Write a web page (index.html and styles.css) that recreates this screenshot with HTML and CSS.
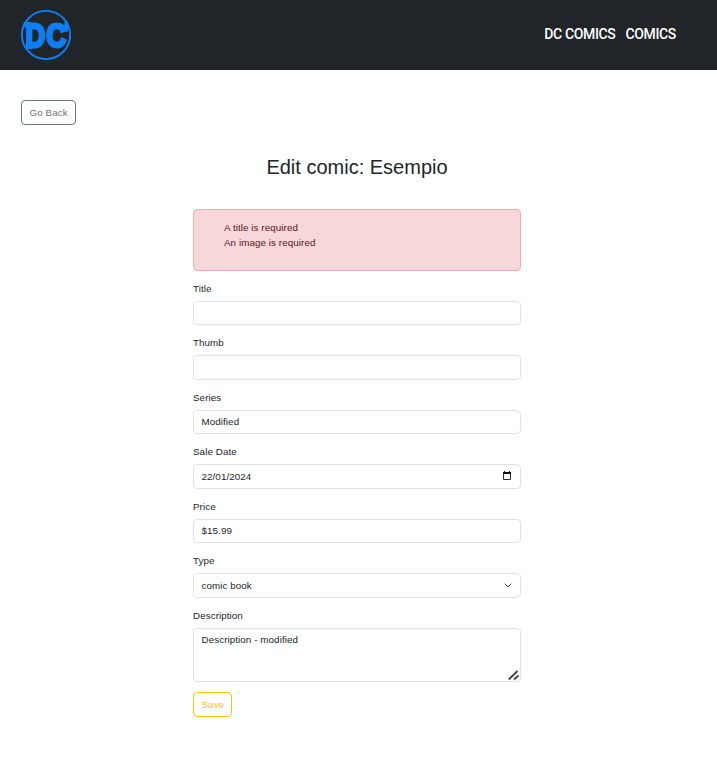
FILE: index.html
```html
<!DOCTYPE html>
<html lang="en">
<head>
<meta charset="utf-8">
<title>Edit comic</title>
<link rel="stylesheet" href="styles.css">
</head>
<body>
<header class="navbar">
  <a class="brand" href="#">
    <svg width="50" height="50" viewBox="0 0 50 50">
      <circle cx="25" cy="25" r="24.1" fill="none" stroke="#0c7ff2" stroke-width="1.9"/>
      <text class="logo-letter" transform="translate(4.6 37.4) scale(.8 1)">D</text>
      <text class="logo-letter" transform="translate(25.4 37.4) scale(.8 1)">C</text>
      <path d="M2.500 12h7v5.500h-6zM5 33.500h6v5.500h-6zM43.500 12h3.500v9.500h-4z" fill="#0c7ff2"/>
    </svg>
  </a>
  <nav class="links">
    <a href="#">DC COMICS</a>
    <a href="#">COMICS</a>
  </nav>
</header>
<main class="page">
  <a class="btn btn-back" href="#">Go Back</a>
  <h1 class="heading">Edit comic: Esempio</h1>
  <form class="form">
    <div class="alert">
      <ul>
        <li>A title is required</li>
        <li>An image is required</li>
      </ul>
    </div>
    <div class="field">
      <label for="title">Title</label>
      <input class="control" id="title" type="text">
    </div>
    <div class="field">
      <label for="thumb">Thumb</label>
      <input class="control" id="thumb" type="text">
    </div>
    <div class="field">
      <label for="series">Series</label>
      <input class="control" id="series" type="text" value="Modified">
    </div>
    <div class="field">
      <label>Sale Date</label>
      <div class="control control-icon date">
        <span>22/01/2024</span>
        <svg width="10" height="10" viewBox="0 0 10 10"><path d="M1.5 2.5V8.5H8.5V2.5" fill="none" stroke="#333"/><path d="M1 1h1V0h1v1h4V0h1v1h1v2H1z" fill="#111"/></svg>
      </div>
    </div>
    <div class="field">
      <label for="price">Price</label>
      <input class="control" id="price" type="text" value="$15.99">
    </div>
    <div class="field">
      <label>Type</label>
      <div class="control control-icon select">
        <span>comic book</span>
        <svg width="8" height="8" viewBox="0 0 16 16"><path d="m2 6 6 6 6-6" fill="none" stroke="#343a40" stroke-width="2" stroke-linecap="round" stroke-linejoin="round"/></svg>
      </div>
    </div>
    <div class="field">
      <label for="description">Description</label>
      <div class="area">
        <textarea class="control" id="description">Description - modified</textarea>
        <svg class="grip" width="12" height="12" viewBox="0 0 12 12"><path d="M.8 10.500 9.500 2M6 10.500 10.500 6.500" fill="none" stroke="#444" stroke-width="1.8"/></svg>
      </div>
    </div>
    <button class="btn btn-save" type="button">Save</button>
  </form>
</main>
</body>
</html>
```
FILE: styles.css
```css
* { box-sizing: border-box; }
html { font-size: 10px; }
body {
  margin: 0;
  background: #fff;
  color: #212529;
  font: 9.8px/15px "Liberation Sans", Arial, sans-serif;
  letter-spacing: .08px;
}
a { text-decoration: none; }
.navbar {
  display: flex;
  justify-content: space-between;
  align-items: center;
  height: 70px;
  padding: 0 41px 0 21px;
  background: #212529;
}
.brand svg { display: block; }
.logo-letter {
  font: bold 34px "Liberation Sans", sans-serif;
  letter-spacing: 0;
  fill: #0c7ff2;
  stroke: #0c7ff2;
  stroke-width: 3px;
}
.links { display: flex; gap: 10px; padding-bottom: 2px; }
.links a {
  color: #fff;
  font-family: Roboto, sans-serif;
  font-size: 14px;
  font-weight: 500;
  letter-spacing: -.35px;
  line-height: 21px;
}
.page { padding: 30px 24px 0 21px; }
.btn {
  display: block;
  height: 25px;
  padding: 4px 7.5px;
  border: 1px solid;
  border-radius: 4px;
  background: #fff;
  font: inherit;
  letter-spacing: inherit;
  white-space: nowrap;
}
.btn-back { width: 55px; color: #6c757d; }
.btn-save { width: 39px; color: #ffc107; }
.heading {
  margin: 30px 0;
  font-size: 20px;
  font-weight: 400;
  letter-spacing: 0;
  line-height: 24px;
  text-align: center;
}
.form { width: 328px; margin: 0 auto; }
.alert {
  margin-bottom: 9.7px;
  padding: 10px;
  border: 1px solid #f1aeb5;
  border-radius: 4px;
  background: #f8d7da;
  color: #58151c;
}
.alert ul { margin: 0 0 10px; padding-left: 20px; list-style: none; }
.field { margin-bottom: 10px; }
.field label { display: block; height: 15px; margin-bottom: 5px; }
.control {
  display: block;
  width: 100%;
  height: 24.5px;
  padding: 3.75px 7.5px;
  border: 1px solid #dee2e6;
  border-radius: 4px;
  background: #fff;
  color: #212529;
  font: inherit;
  letter-spacing: inherit;
}
.control-icon { display: flex; align-items: center; justify-content: space-between; }
.date { padding-right: 8px; }
.select { padding-right: 8px; }
.area { position: relative; }
.area .control { height: 54px; resize: none; overflow: hidden; }
.grip { position: absolute; right: 1px; bottom: 1px; }
```
